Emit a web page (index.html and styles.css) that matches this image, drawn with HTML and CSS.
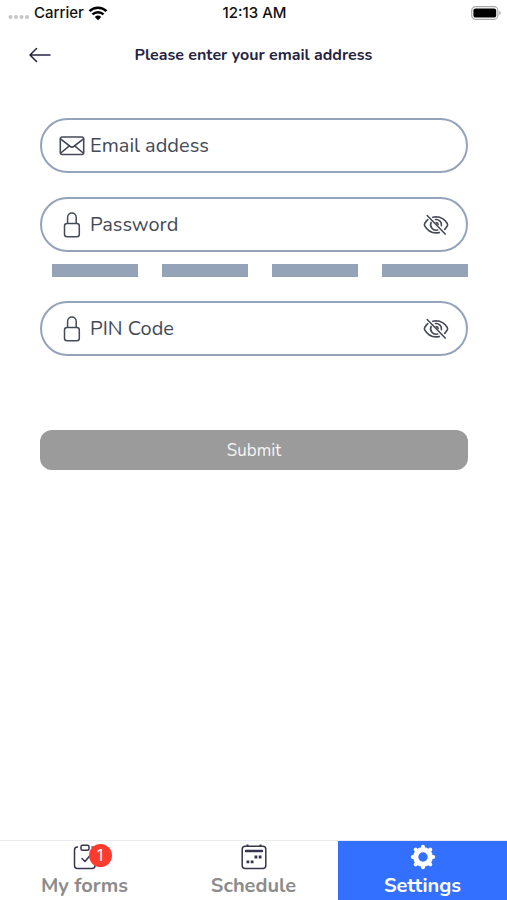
FILE: index.html
```html
<!DOCTYPE html>
<html lang="en">
<head>
<meta charset="utf-8">
<meta name="viewport" content="width=device-width, initial-scale=1">
<title>Please enter your email address</title>
<link rel="stylesheet" href="styles.css">
</head>
<body>
<div class="screen">
  <div class="status">
    <div class="carrier">
      <svg class="signal" width="22" height="6" viewBox="0 0 22 6" aria-hidden="true" fill="#c4c4c6"><circle cx="2.500" cy="3" r="2"/><circle cx="8" cy="3" r="2"/><circle cx="13.500" cy="3" r="2"/><circle cx="19" cy="3" r="2"/></svg>
      <span>Carrier</span>
      <svg width="20" height="15" viewBox="0 0 20 15" aria-hidden="true" fill="none" stroke="#000" stroke-width="2.500"><path d="M1.500 5.200a12.200 12.200 0 0 1 17 0M4.500 8.400a7.900 7.900 0 0 1 11 0"/><path d="M10 14.200l-3.200-3.300a4.600 4.600 0 0 1 6.400 0z" fill="#000" stroke="none"/></svg>
    </div>
    <span>12:13 AM</span>
    <svg class="battery" width="30" height="14" viewBox="0 0 30 14" aria-hidden="true"><rect x=".7" y=".7" width="26.200" height="12.600" rx="3.800" fill="#fff" stroke="#a9a9a9" stroke-width="1.200"/><rect x="2.400" y="2.400" width="22.800" height="9.200" rx="2.200"/><path d="M28.300 5v4q1.500-.6 1.500-2t-1.500-2z" fill="#a9a9a9"/></svg>
  </div>
  <header class="header">
    <button class="back" type="button" aria-label="Back"><svg width="22" height="16" viewBox="0 0 22 16" fill="none" stroke="#252342" stroke-width="1.500" stroke-linecap="round" stroke-linejoin="round"><path d="M21 8H1M7.500 1.500L1 8l6.500 6.500"/></svg></button>
    <h1>Please enter your email address</h1>
  </header>
  <form class="form">
    <div class="field">
      <svg width="26" height="26" viewBox="0 0 26 26" aria-hidden="true" fill="none" stroke="#454a57" stroke-width="1.600" stroke-linejoin="round"><rect x="1.300" y="4" width="23.400" height="17.500" rx="2"/><path d="M1.800 6.200L11.300 13.500q1.700 1.200 3.400 0l9.500-7.300M1.800 20l8.500-7.200M24.200 20l-8.500-7.200"/></svg>
      <input type="email" placeholder="Email addess" aria-label="Email addess">
    </div>
    <div class="field">
      <svg width="26" height="26" viewBox="0 0 26 26" aria-hidden="true" fill="none" stroke="#454a57" stroke-width="1.500"><rect x="5.500" y="11.500" width="14.800" height="13.300" rx="2.500"/><path d="M8.600 11.500V5.400a4.300 4.300 0 0 1 8.600 0v6.100"/></svg>
      <input type="password" placeholder="Password" aria-label="Password">
      <button class="eye" type="button" aria-label="Show password"><svg width="26" height="22" viewBox="0 0 26 22"><use href="#eye-off"/></svg></button>
    </div>
    <div class="strength" aria-hidden="true"><span></span><span></span><span></span><span></span></div>
    <div class="field">
      <svg width="26" height="26" viewBox="0 0 26 26" aria-hidden="true" fill="none" stroke="#454a57" stroke-width="1.500"><rect x="5.500" y="11.500" width="14.800" height="13.300" rx="2.500"/><path d="M8.600 11.500V5.400a4.300 4.300 0 0 1 8.600 0v6.100"/></svg>
      <input type="password" placeholder="PIN Code" aria-label="PIN Code">
      <button class="eye" type="button" aria-label="Show PIN code"><svg width="26" height="22" viewBox="0 0 26 22"><g id="eye-off" fill="none" stroke="#454a57" stroke-width="1.600" stroke-linecap="round"><path d="M4.200 1.500l18 18.500"/><path d="M4.800 5.600Q3 7.200 1.700 9.500q-.6 1.200 0 2.300Q5.500 18.700 13 18.900q1.800 0 3.400-.5M9.800 3.200q1.500-.5 3.200-.5 7.500.2 11.300 6.800.6 1.200 0 2.300-1.100 2-2.700 3.500"/><path d="M8.100 8.400a5.500 5.500 0 0 0 6.500 7.600M12.500 5.500a5.400 5.400 0 0 1 5.900 6.200M13.200 8.600q1.700.3 2 1.900"/></g></svg></button>
    </div>
    <button class="submit" type="submit">Submit</button>
  </form>
  <nav class="tabs">
    <a href="#forms"><span class="icon"><svg width="26" height="26" viewBox="0 0 26 26" aria-hidden="true" fill="none" stroke="#35364b" stroke-width="1.500" stroke-linecap="round" stroke-linejoin="round"><path d="M5.500 3q-3 0-3 3v15.500q0 3 3 3H20q3 0 3-3V6q0-3-3-3"/><rect x="9" y="1.200" width="8" height="5" rx="1.500"/><path d="M10 14.500l3 3 5-6"/></svg><b class="badge">1</b></span>My forms</a>
    <a href="#schedule"><span class="icon"><svg width="26" height="26" viewBox="0 0 26 26" aria-hidden="true" fill="none" stroke="#35364b" stroke-width="1.500"><rect x="1.200" y="2.200" width="23.600" height="22.300" rx="3"/><path d="M6.500 .5v2M19.500 .5v2" stroke-width="2"/><path d="M5 7h16" stroke-width="2.500" stroke-linecap="round"/><path d="M13.500 13h2.800M17.700 13h2.800M5.500 17.800h2.800M9.700 17.800h2.800" stroke-width="2.800"/></svg></span>Schedule</a>
    <a class="active" href="#settings" aria-current="page"><span class="icon"><svg width="26" height="26" viewBox="0 0 26 26" aria-hidden="true" fill="none" stroke="#fff"><circle cx="13" cy="13" r="7.300" stroke-width="5.200"/><path d="M13 4V2.800M13 22v1.200M4 13H2.800M22 13h1.200M6.600 6.600L5.700 5.700M19.400 6.600l.9-.9M6.600 19.400l-.9.900M19.400 19.400l.9.900" stroke-width="4" stroke-linecap="round"/></svg></span>Settings</a>
  </nav>
</div>
</body>
</html>
```
FILE: styles.css
```css
* { box-sizing: border-box; }

body {
  margin: 0;
  background: #fff;
  font-family: Nunito, "Noto Sans", sans-serif;
}

button {
  border: 0;
  padding: 0;
  background: none;
  font: inherit;
}

svg { display: block; flex: none; }

.screen {
  display: flex;
  flex-direction: column;
  min-height: 100vh;
}

.status {
  display: grid;
  grid-template-columns: 1fr auto 1fr;
  align-items: center;
  height: 26px;
  padding: 0 6px 0 8px;
  font: 500 15px/26px Inter, sans-serif;
  color: #111;
}

.carrier {
  display: flex;
  align-items: center;
  gap: 4px;
}

.signal { margin-top: 8px; }

.battery { justify-self: end; }

.header {
  display: grid;
  grid-template-columns: 24px 1fr 24px;
  align-items: center;
  height: 58px;
  padding: 0 29px;
}

h1 {
  margin: 0;
  font-size: 16px;
  line-height: 24px;
  font-weight: 700;
  text-align: center;
  color: #252342;
}

.form {
  display: flex;
  flex-direction: column;
  gap: 24px;
  padding: 34px 39px 0 40px;
}

.field {
  display: flex;
  align-items: center;
  gap: 5px;
  height: 55px;
  padding: 0 17px;
  border: 2px solid #94a3bb;
  border-radius: 28px;
}

.field input {
  flex: 1;
  min-width: 0;
  border: 0;
  padding: 0;
  outline: 0;
  background: none;
  font: inherit;
  font-size: 20px;
  line-height: 28px;
  color: #454a57;
}

.field input::placeholder { color: #454a57; opacity: 1; }

.strength {
  display: grid;
  grid-template-columns: repeat(4, 1fr);
  gap: 24px;
  height: 13px;
  margin: -12px 0 0 12px;
}

.strength span { background: #94a3b8; }

.submit {
  height: 40px;
  margin-top: 50px;
  border-radius: 12px;
  background: #9b9b9b;
  color: #f5f5f5;
  font-size: 17px;
}

.tabs {
  display: grid;
  grid-template-columns: repeat(3, 1fr);
  height: 60px;
  margin-top: auto;
  border-top: 1px solid #e9ebed;
}

.tabs a {
  display: flex;
  flex-direction: column;
  align-items: center;
  padding-top: 3px;
  font-size: 20px;
  line-height: 32px;
  font-weight: 700;
  color: #8c8c8c;
  text-decoration: none;
}

.tabs .active { background: #3370ff; color: #fff; }

.icon { position: relative; }

.badge {
  position: absolute;
  top: 0;
  left: 17px;
  width: 23px;
  height: 23px;
  border-radius: 50%;
  background: #ff3b30;
  color: #fff;
  font: 400 16px/23px Inter, sans-serif;
  text-align: center;
}
```
